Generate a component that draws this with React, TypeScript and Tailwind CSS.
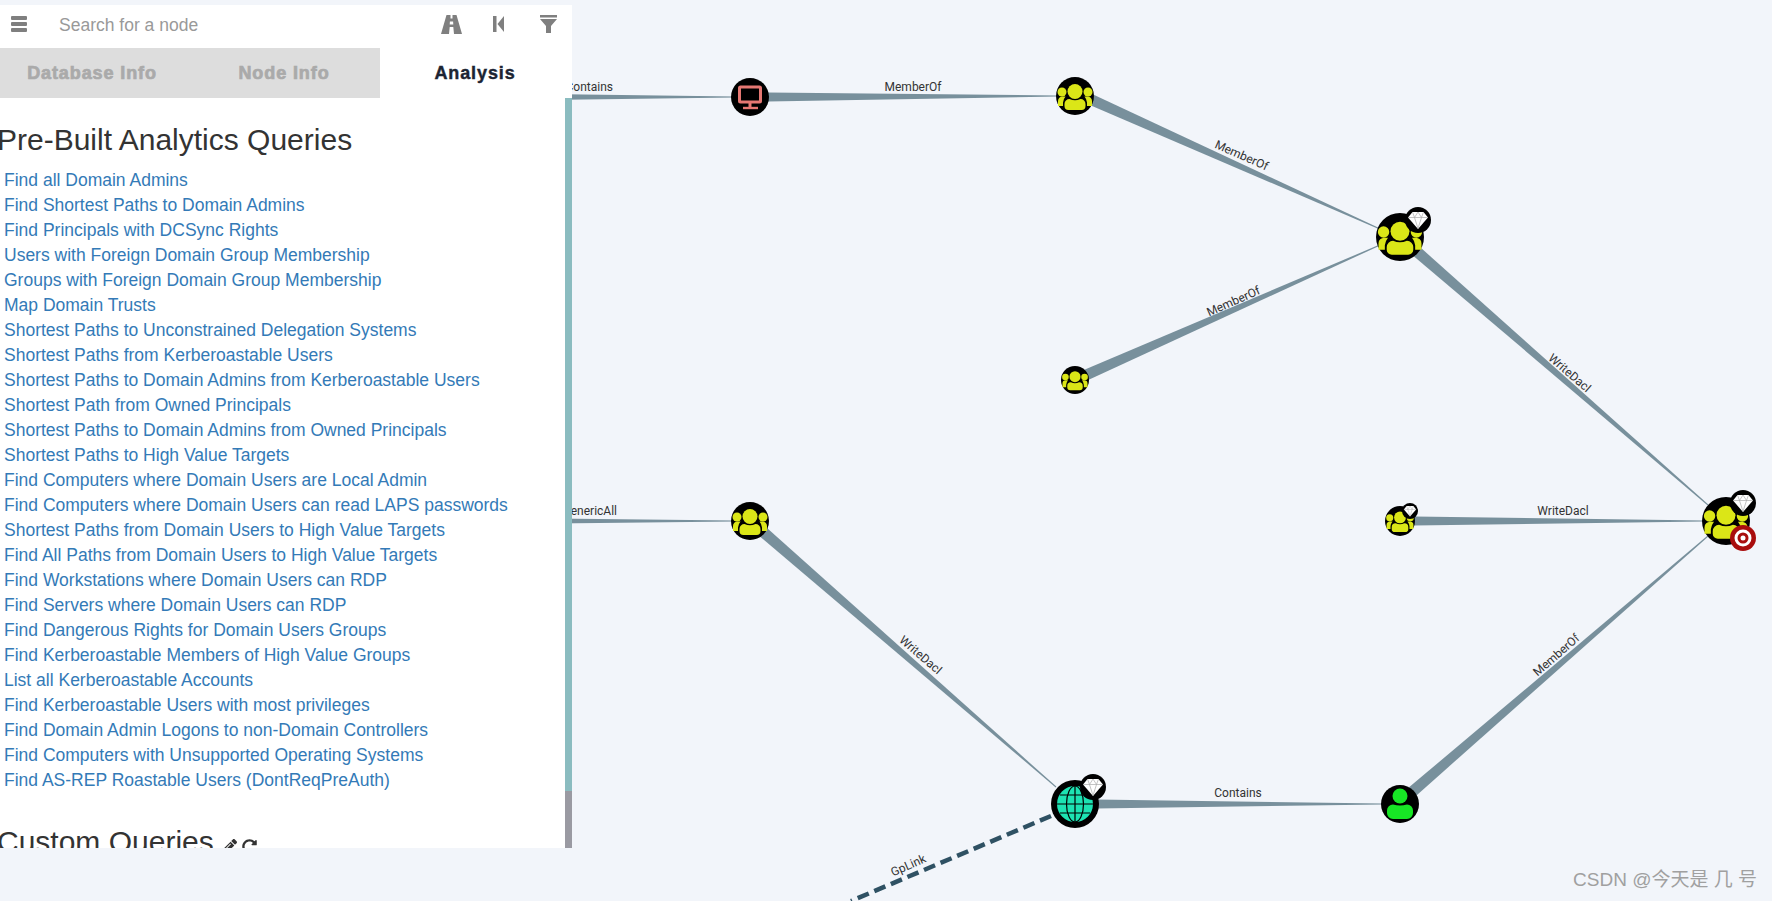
import { FaPencilAlt, FaRedoAlt } from "react-icons/fa";

const queries = [
    "Find all Domain Admins",
    "Find Shortest Paths to Domain Admins",
    "Find Principals with DCSync Rights",
    "Users with Foreign Domain Group Membership",
    "Groups with Foreign Domain Group Membership",
    "Map Domain Trusts",
    "Shortest Paths to Unconstrained Delegation Systems",
    "Shortest Paths from Kerberoastable Users",
    "Shortest Paths to Domain Admins from Kerberoastable Users",
    "Shortest Path from Owned Principals",
    "Shortest Paths to Domain Admins from Owned Principals",
    "Shortest Paths to High Value Targets",
    "Find Computers where Domain Users are Local Admin",
    "Find Computers where Domain Users can read LAPS passwords",
    "Shortest Paths from Domain Users to High Value Targets",
    "Find All Paths from Domain Users to High Value Targets",
    "Find Workstations where Domain Users can RDP",
    "Find Servers where Domain Users can RDP",
    "Find Dangerous Rights for Domain Users Groups",
    "Find Kerberoastable Members of High Value Groups",
    "List all Kerberoastable Accounts",
    "Find Kerberoastable Users with most privileges",
    "Find Domain Admin Logons to non-Domain Controllers",
    "Find Computers with Unsupported Operating Systems",
    "Find AS-REP Roastable Users (DontReqPreAuth)",
];

// wide end at (x1,y1), thin end at (x2,y2)
function Edge({ x1, y1, x2, y2, w }: { x1: number; y1: number; x2: number; y2: number; w: number }) {
    const len = Math.hypot(x2 - x1, y2 - y1);
    const nx = -(y2 - y1) / len;
    const ny = (x2 - x1) / len;
    const h = w / 2;
    const pts = [
        [x1 + nx * h, y1 + ny * h],
        [x2 + nx * 0.5, y2 + ny * 0.5],
        [x2 - nx * 0.5, y2 - ny * 0.5],
        [x1 - nx * h, y1 - ny * h],
    ];
    return <polygon points={pts.map((p) => p.join(",")).join(" ")} fill="#78909c" />;
}

function Label({ x, y, r = 0, text, anchor = "middle" }: { x: number; y: number; r?: number; text: string; anchor?: "middle" | "end" }) {
    return (
        <text
            x={x}
            y={y}
            textAnchor={anchor}
            transform={`rotate(${r} ${x} ${y})`}
            className="fill-[#333] text-[12px] [font-family:Roboto,sans-serif]"
        >
            {text}
        </text>
    );
}

function GroupGlyph({ cx, cy, r }: { cx: number; cy: number; r: number }) {
    return (
        <g transform={`translate(${cx} ${cy}) scale(${r / 19})`}>
            <circle r="19" fill="#000" />
            <g fill="#dbe617">
                <circle cx="-13" cy="-4" r="4.5" />
                <circle cx="13" cy="-4" r="4.5" />
                <path d="M-17 10 v-5 a4.5 4.5 0 0 1 4.5-4.5 h3 a11 11 0 0 0-2.5 6 v3.5 z" />
                <path d="M17 10 v-5 a4.5 4.5 0 0 0-4.5-4.5 h-3 a11 11 0 0 1 2.5 6 v3.5 z" />
                <circle cx="0" cy="-4.5" r="7.5" />
                <path d="M-10.5 10 v-2 a5 5 0 0 1 5-5 q5.5 2.5 11 0 a5 5 0 0 1 5 5 v2 a4 4 0 0 1-4 4 h-13 a4 4 0 0 1-4-4 z" />
            </g>
        </g>
    );
}

function Gem({ cx, cy, r }: { cx: number; cy: number; r: number }) {
    return (
        <g transform={`translate(${cx} ${cy}) scale(${r / 13})`}>
            <circle r="13" fill="#000" />
            <path d="M-5.5 -8 h11 l4.5 5.5 -10 11.5 -10 -11.5 z" fill="#fff" />
            <path d="M-10 -2.5 h20 M-3.5 -2.5 l3.5 11 3.5 -11 M-5.5 -8 l2 5.5 3.5 -5.5 3.5 5.5 2 -5.5" fill="none" stroke="#aaa" strokeWidth="0.7" />
        </g>
    );
}

function Graph() {
    return (
        <svg className="absolute inset-0" width="1772" height="901" viewBox="0 0 1772 901">
            <Edge x1={460} y1={97} x2={735} y2={97} w={8} />
            <Edge x1={768} y1={97} x2={1058} y2={96} w={9} />
            <Edge x1={1092} y1={100} x2={1380} y2={229} w={11} />
            <Edge x1={1086} y1={375} x2={1380} y2={245} w={11} />
            <Edge x1={1415} y1={250} x2={1708} y2={505} w={11} />
            <Edge x1={1414} y1={521} x2={1704} y2={521} w={9} />
            <Edge x1={460} y1={521} x2={735} y2={521} w={7} />
            <Edge x1={762} y1={531} x2={1056} y2={787} w={11} />
            <Edge x1={1096} y1={804} x2={1382} y2={804} w={9} />
            <Edge x1={1412} y1={792} x2={1708} y2={536} w={11} />
            <line x1={1051} y1={816} x2={851} y2={901} stroke="#2f5163" strokeWidth="4.5" strokeDasharray="12 6" />

            <Label x={613} y={91} text="Contains" anchor="end" />
            <Label x={617} y={515} text="GenericAll" anchor="end" />
            <Label x={913} y={91} text="MemberOf" />
            <Label x={1240} y={159} r={24} text="MemberOf" />
            <Label x={1235} y={305} r={-24} text="MemberOf" />
            <Label x={1567} y={376} r={41} text="WriteDacl" />
            <Label x={1563} y={515} text="WriteDacl" />
            <Label x={918} y={658} r={41} text="WriteDacl" />
            <Label x={1238} y={797} text="Contains" />
            <Label x={1559} y={658} r={-41} text="MemberOf" />
            <Label x={910} y={869} r={-24} text="GpLink" />

            {/* computer */}
            <circle cx={750} cy={97} r={19} fill="#000" />
            <g fill="none" stroke="#e67873" strokeWidth="3">
                <rect x={739.5} y={87} width={21} height={15} rx={1} />
                <path d="M750 102 v5" />
                <path d="M743 108 h15" strokeWidth="2.4" />
            </g>

            <GroupGlyph cx={1075} cy={96} r={19} />
            <GroupGlyph cx={1400} cy={237} r={24} />
            <Gem cx={1418} cy={220} r={13} />
            <GroupGlyph cx={1075} cy={380} r={14} />
            <GroupGlyph cx={1400} cy={521} r={15} />
            <Gem cx={1410} cy={511} r={8} />
            <GroupGlyph cx={750} cy={521} r={19} />
            <GroupGlyph cx={1726} cy={521} r={24} />
            <Gem cx={1743} cy={503} r={13} />

            {/* high value target marker */}
            <circle cx={1743} cy={538} r={13} fill="#a90d0d" />
            <circle cx={1743} cy={538} r={8.5} fill="#fff" />
            <circle cx={1743} cy={538} r={5.5} fill="#a90d0d" />
            <circle cx={1743} cy={538} r={2.5} fill="#fff" />

            {/* domain */}
            <circle cx={1075} cy={804} r={24} fill="#000" />
            <circle cx={1075} cy={804} r={18} fill="#1de3b3" />
            <g fill="none" stroke="#000" strokeWidth="1.2">
                <ellipse cx={1075} cy={804} rx={8.5} ry={18} />
                <path d="M1075 786 v36 M1057 804 h36 M1060 795 h30 M1060 813 h30" />
            </g>
            <Gem cx={1093} cy={787} r={13} />

            {/* user */}
            <circle cx={1400} cy={804} r={19} fill="#000" />
            <g fill="#17e625">
                <circle cx={1400} cy={796} r={7.5} />
                <path d="M1387 813 v-2.5 a6 6 0 0 1 6-6 q7 2 14 0 a6 6 0 0 1 6 6 v2.5 a6 6 0 0 1-6 6 h-14 a6 6 0 0 1-6-6 z" />
            </g>
        </svg>
    );
}

function BarsIcon() {
    return (
        <svg width="16" height="16" viewBox="0 0 16 16" fill="#7f7f7f">
            <rect y="0" width="16" height="4" rx="1" />
            <rect y="6" width="16" height="4" rx="1" />
            <rect y="12" width="16" height="4" rx="1" />
        </svg>
    );
}

function RoadIcon() {
    return (
        <svg width="21" height="19" viewBox="0 0 21 19" fill="#7f7f7f">
            <path d="M5.5 0 h4 v3.5 h2 V0 h4 L21 19 h-8 l-.7-7 h-3.6 l-.7 7 H0 z M8.9 6.5 l-.2 3 h3.6 l-.2-3 z" fillRule="evenodd" />
        </svg>
    );
}

function BackIcon() {
    return (
        <svg width="11" height="16" viewBox="0 0 11 16" fill="#7f7f7f">
            <rect x="0" y="0" width="3.5" height="16" />
            <path d="M11 0 v16 L4.5 8 z" />
        </svg>
    );
}

function FilterIcon() {
    return (
        <svg width="17" height="18" viewBox="0 0 17 18" fill="#7f7f7f">
            <rect x="0" y="0" width="17" height="2.5" />
            <path d="M0 4 h17 l-6 7 v7 h-5 v-7 z" />
        </svg>
    );
}

export default function App() {
    return (
        <div className="relative w-[1772px] h-[901px] overflow-hidden bg-[#f2f5fa] font-['Liberation_Sans',sans-serif]">
            <Graph />

            {/* side panel */}
            <div className="absolute left-0 top-[5px] w-[572px] h-[843px] bg-white flex flex-col overflow-hidden">
                <div className="h-[43px] flex items-center shrink-0">
                    <div className="ml-[11px] mb-[5px]">
                        <BarsIcon />
                    </div>
                    <span className="ml-[32px] mb-[2px] text-[17.5px] text-[#999]">Search for a node</span>
                    <div className="ml-auto mb-[5px] flex items-center">
                        <RoadIcon />
                        <div className="ml-[31px]">
                            <BackIcon />
                        </div>
                        <div className="ml-[36px] mr-[15px]">
                            <FilterIcon />
                        </div>
                    </div>
                </div>

                <div className="flex h-[50px] shrink-0 text-[18px] font-bold tracking-[0.9px]">
                    <div className="w-[190px] pr-[6px] bg-[#ddd] text-[#aaa] flex items-center justify-center [-webkit-text-stroke:0.7px_#aaa]">Database Info</div>
                    <div className="w-[190px] pr-[2px] bg-[#ddd] text-[#aaa] flex items-center justify-center [-webkit-text-stroke:0.7px_#aaa]">Node Info</div>
                    <div className="w-[192px] pr-[2px] text-[#1c2433] flex items-center justify-center [-webkit-text-stroke:0.4px_#1c2433]">Analysis</div>
                </div>

                <div className="flex flex-1 min-h-0">
                    <div className="flex-1 min-w-0 overflow-hidden">
                        <h3 className="-ml-[3px] mt-[23px] text-[30px] leading-[38px] text-[#333]">Pre-Built Analytics Queries</h3>
                        <ul className="mt-[9px] ml-[4px]">
                            {queries.map((q) => (
                                <li key={q} className="h-[25px] text-[17.5px] leading-[25px] text-[#337ab7] whitespace-nowrap">
                                    {q}
                                </li>
                            ))}
                        </ul>
                        <h3 className="-ml-[3px] mt-[30px] text-[30px] leading-[38px] text-[#333] flex items-center whitespace-nowrap">
                            Custom Queries
                            <FaPencilAlt className="ml-[8px] mt-[8px] w-[15px] h-[15px]" />
                            <FaRedoAlt className="ml-[5px] mt-[8px] w-[15px] h-[15px]" />
                        </h3>
                    </div>
                    <div className="w-[7px] shrink-0 flex flex-col">
                        <div className="h-[693px] bg-[#8bbcc0]" />
                        <div className="flex-1 bg-[#9a9aa2]" />
                    </div>
                </div>
            </div>

            <span className="absolute right-[15px] bottom-[7px] text-[19px] text-[#a0a0a0] whitespace-nowrap font-['Liberation_Sans','Noto_Sans_CJK_SC',sans-serif]">
                CSDN @今天是 几 号
            </span>
        </div>
    );
}
